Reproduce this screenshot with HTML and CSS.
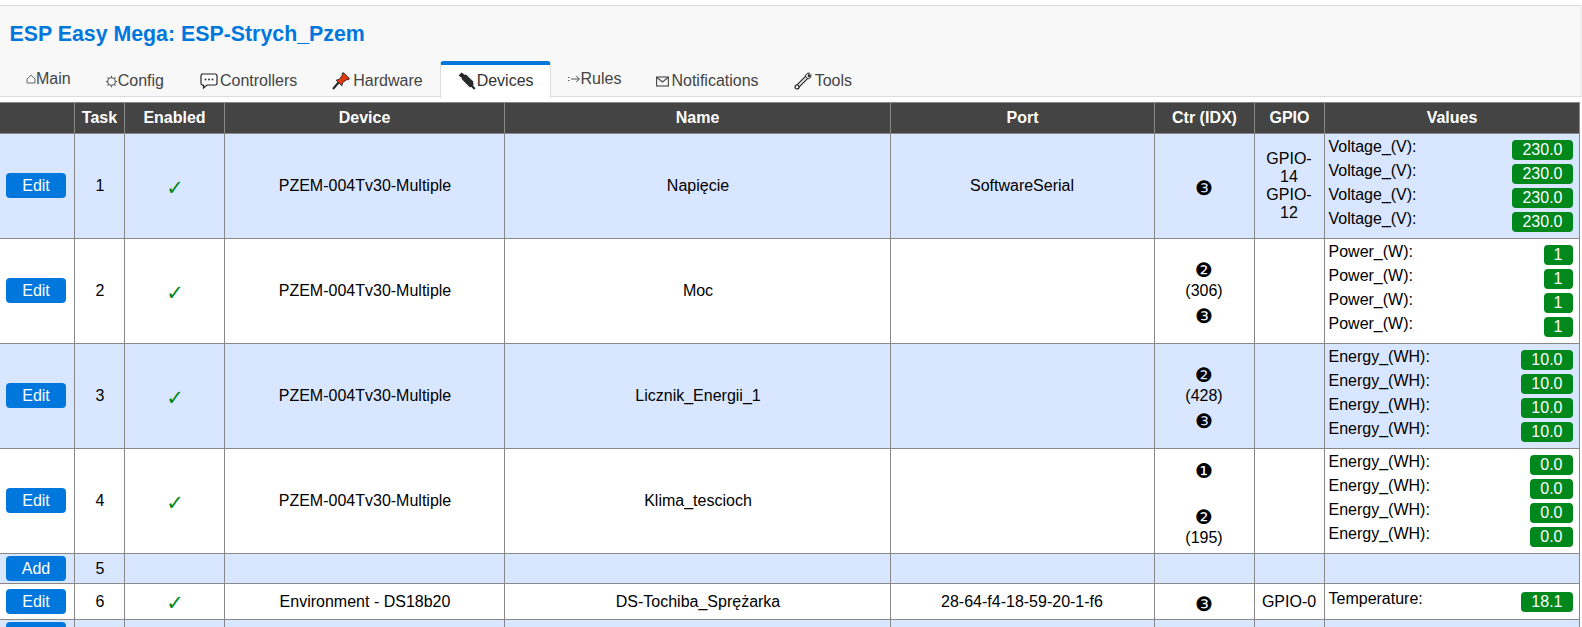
FILE: index.html
```html
<!DOCTYPE html>
<html lang="pl">
<head>
<meta charset="utf-8">
<title>ESP Easy Mega: ESP-Strych_Pzem</title>
<link rel="stylesheet" href="styles.css">
</head>
<body>
<header class="top">
  <h1 class="title">ESP Easy Mega: ESP-Strych_Pzem</h1>
  <nav class="tabs">
    <a class="tab raised first"><svg class="ic ic-main" viewBox="0 0 10 10"><path d="M1 9V5L5 1.2 9 5V9Z" fill="none" stroke="#666" stroke-width="1"/></svg>Main</a>
    <a class="tab cfg"><svg class="ic ic-config" viewBox="0 0 13 13"><circle cx="6.5" cy="6.5" r="3.8" fill="none" stroke="#555" stroke-width="1.1"/><path d="M6.5 .8V2.6M6.5 10.4V12.2M.8 6.5H2.6M10.4 6.5H12.2M2.5 2.5L3.7 3.7M9.3 9.3L10.5 10.5M2.5 10.5L3.7 9.3M9.3 3.7L10.5 2.5" stroke="#555" stroke-width="1.1"/></svg>Config</a>
    <a class="tab"><svg class="ic ic-ctrl" viewBox="0 0 18 16"><path d="M3 1H15.5A1.7 1.7 0 0 1 17 2.7V10.3A1.7 1.7 0 0 1 15.5 12H7L3.5 15V12H3A1.7 1.7 0 0 1 1 10.3V2.7A1.7 1.7 0 0 1 3 1Z" fill="#fff" stroke="#222" stroke-width="1.2"/><circle cx="5.5" cy="6.5" r="1" fill="#333"/><circle cx="9" cy="6.5" r="1" fill="#333"/><circle cx="12.5" cy="6.5" r="1" fill="#333"/></svg>Controllers</a>
    <a class="tab"><svg class="ic ic-pin" viewBox="0 0 18 18"><path d="M1 17L6.5 10.5" stroke="#222" stroke-width="2"/><path d="M4.2 8.2L7.5 7.2 10.5 3 10 1.3 11.5 .8 17.3 6.3 16.6 7.8 15 7.4 10.8 10.5 9.8 13.8Z" fill="#e8380d" stroke="#222" stroke-width=".9"/></svg>Hardware</a>
    <a class="tab active"><svg class="ic ic-plug" viewBox="0 0 18 18"><path d="M.6 3.4L3.6.6 7.4 3.4 4.8 6.4Z" fill="#222"/><path d="M4.6 3.4L8 2.6 15 9.2 15.6 13 12 15.4 8 11.6 3.6 7Z" fill="#2a2a2a"/><path d="M13 13L16.8 17" stroke="#222" stroke-width="2"/></svg>Devices</a>
    <a class="tab raised"><svg class="ic ic-rules" viewBox="0 0 13 10"><path d="M0 3.5H1.4M0 6.5H1.4M3 5H11M8.2 2.2L11.6 5 8.2 7.8" fill="none" stroke="#555" stroke-width="1"/></svg>Rules</a>
    <a class="tab"><svg class="ic ic-mail" viewBox="0 0 13 11"><rect x=".6" y="1" width="11.8" height="9" fill="none" stroke="#444" stroke-width="1.1"/><path d="M1 1.5L6.5 6 12 1.5" fill="none" stroke="#444" stroke-width="1.1"/></svg>Notifications</a>
    <a class="tab"><svg class="ic ic-tools" viewBox="0 0 18 18"><path d="M3 15L14 4" stroke="#222" stroke-width="4" stroke-linecap="round"/><path d="M3 15L14 4" stroke="#ddd" stroke-width="2"/><circle cx="3" cy="15" r="2" fill="#fff" stroke="#222" stroke-width="1.2"/><path d="M13 1.5L15.5 1 14 4 15 5 17 2.5 16.5 5.5 14 7 11 4Z" fill="#ddd" stroke="#222" stroke-width=".9"/></svg>Tools</a>
  </nav>
</header>
<table class="grid">
  <colgroup><col class="c1"><col class="c2"><col class="c3"><col class="c4"><col class="c5"><col class="c6"><col class="c7"><col class="c8"><col class="c9"></colgroup>
  <thead>
    <tr><th></th><th>Task</th><th>Enabled</th><th>Device</th><th>Name</th><th>Port</th><th>Ctr (IDX)</th><th>GPIO</th><th>Values</th></tr>
  </thead>
  <tbody>
    <tr class="big odd">
      <td><a class="btn">Edit</a></td><td>1</td><td><span class="ok">✓</span></td><td>PZEM-004Tv30-Multiple</td><td>Napięcie</td><td>SoftwareSerial</td>
      <td><span class="g">❸</span></td><td>GPIO-14<br>GPIO-12</td>
      <td class="vals">
        <div class="val"><span class="lab">Voltage_(V):</span><span class="num">230.0</span></div>
        <div class="val"><span class="lab">Voltage_(V):</span><span class="num">230.0</span></div>
        <div class="val"><span class="lab">Voltage_(V):</span><span class="num">230.0</span></div>
        <div class="val"><span class="lab">Voltage_(V):</span><span class="num">230.0</span></div>
      </td>
    </tr>
    <tr class="big">
      <td><a class="btn">Edit</a></td><td>2</td><td><span class="ok">✓</span></td><td>PZEM-004Tv30-Multiple</td><td>Moc</td><td></td>
      <td><span class="g">❷</span>(306)<span class="g">❸</span></td><td></td>
      <td class="vals">
        <div class="val"><span class="lab">Power_(W):</span><span class="num">1</span></div>
        <div class="val"><span class="lab">Power_(W):</span><span class="num">1</span></div>
        <div class="val"><span class="lab">Power_(W):</span><span class="num">1</span></div>
        <div class="val"><span class="lab">Power_(W):</span><span class="num">1</span></div>
      </td>
    </tr>
    <tr class="big odd">
      <td><a class="btn">Edit</a></td><td>3</td><td><span class="ok">✓</span></td><td>PZEM-004Tv30-Multiple</td><td>Licznik_Energii_1</td><td></td>
      <td><span class="g">❷</span>(428)<span class="g">❸</span></td><td></td>
      <td class="vals">
        <div class="val"><span class="lab">Energy_(WH):</span><span class="num">10.0</span></div>
        <div class="val"><span class="lab">Energy_(WH):</span><span class="num">10.0</span></div>
        <div class="val"><span class="lab">Energy_(WH):</span><span class="num">10.0</span></div>
        <div class="val"><span class="lab">Energy_(WH):</span><span class="num">10.0</span></div>
      </td>
    </tr>
    <tr class="big">
      <td><a class="btn">Edit</a></td><td>4</td><td><span class="ok">✓</span></td><td>PZEM-004Tv30-Multiple</td><td>Klima_tescioch</td><td></td>
      <td><span class="g">❶</span><br><span class="g">❷</span>(195)</td><td></td>
      <td class="vals">
        <div class="val"><span class="lab">Energy_(WH):</span><span class="num">0.0</span></div>
        <div class="val"><span class="lab">Energy_(WH):</span><span class="num">0.0</span></div>
        <div class="val"><span class="lab">Energy_(WH):</span><span class="num">0.0</span></div>
        <div class="val"><span class="lab">Energy_(WH):</span><span class="num">0.0</span></div>
      </td>
    </tr>
    <tr class="add odd">
      <td><a class="btn">Add</a></td><td>5</td><td></td><td></td><td></td><td></td><td></td><td></td><td></td>
    </tr>
    <tr class="one">
      <td><a class="btn">Edit</a></td><td>6</td><td><span class="ok">✓</span></td><td>Environment - DS18b20</td><td>DS-Tochiba_Sprężarka</td><td>28-64-f4-18-59-20-1-f6</td>
      <td><span class="g">❸</span></td><td>GPIO-0</td>
      <td class="vals"><div class="val"><span class="lab">Temperature:</span><span class="num">18.1</span></div></td>
    </tr>
    <tr class="add odd">
      <td><a class="btn"></a></td><td></td><td></td><td></td><td></td><td></td><td></td><td></td><td></td>
    </tr>
  </tbody>
</table>
</body>
</html>
```
FILE: styles.css
```css
html, body { margin: 0; height: 100%; overflow: hidden; background: #fff; }
body { font-family: "Liberation Sans", Arial, sans-serif; font-size: 16px; color: #000; }
.top { margin-top: 5px; height: 90px; background: #f8f8f8; border-top: 1px solid #ddd; border-bottom: 1px solid #ddd; border-right: 2px solid #f0f0f0; display: flex; flex-direction: column; }
.title { margin: 16px 0 0 9.5px; font-size: 21.33px; line-height: 25px; font-weight: bold; color: #07d; }
.tabs { display: flex; gap: 1px; margin-top: 14px; padding-left: 8px; }
.tab { display: flex; align-items: center; height: 37px; padding: 0 16px; border: 1px solid transparent; border-top-width: 4px; border-radius: 4px 4px 0 0; box-sizing: border-box; color: #444; line-height: 18px; }
.first { padding-left: 17px; padding-right: 15px; }
.cfg { padding-right: 17px; }
.raised { padding-bottom: 5px; }
.active { margin-left: -1px; padding: 0 16px 2px 17px; background: #fff; border-color: #ddd; border-top-color: #07d; border-bottom: 0; color: #333; }
.active + .tab { margin-left: -1px; }
.ic { display: block; flex: none; }
.ic-main { width: 10px; height: 10px; }
.ic-config { width: 13px; height: 13px; }
.ic-ctrl { width: 18px; height: 16px; margin-right: 2px; }
.ic-pin { width: 18px; height: 18px; margin-right: 3px; }
.ic-plug { width: 18px; height: 18px; margin-right: 1px; }
.ic-rules { width: 13px; height: 10px; }
.ic-mail { width: 13px; height: 11px; margin-right: 2px; }
.ic-tools { width: 18px; height: 18px; margin-right: 3px; }
.grid { margin-top: 5px; width: 1579.5px; table-layout: fixed; border-collapse: collapse; }
.c1 { width: 74px; } .c2 { width: 50px; } .c3 { width: 100px; } .c4 { width: 280px; } .c5 { width: 386px; }
.c6 { width: 264px; } .c7 { width: 100px; } .c8 { width: 70px; } .c9 { width: 255px; }
th { height: 30px; padding: 0 0 0 1px; background: #444; color: #fff; font-weight: bold; border: 1px solid #888; }
td { padding: 0 5px 0 7px; text-align: center; vertical-align: middle; border: 1px solid #888; line-height: 18px; }
td:nth-child(n+6) { padding: 0 6px; }
th:first-child, td:first-child { padding: 0; border-left: 0; }
.odd td { background: #d9e6ff; }
.big td { height: 104px; }
.add td { height: 29px; }
.one td { height: 35px; }
.btn { display: block; width: 60px; height: 25px; margin: 0 auto 1px 6px; background: #07d; color: #fff; border-radius: 4px; line-height: 25px; text-align: center; }
.ok { display: block; padding-top: 3px; color: #00881c; font-family: "DejaVu Sans", sans-serif; font-size: 21px; }
.g { display: block; box-sizing: border-box; height: 28px; padding-top: 4px; font-family: "DejaVu Sans", sans-serif; font-size: 20px; line-height: 24px; }
td.vals { padding: 0 6px 0 4px; text-align: left; }
.val { display: flex; justify-content: space-between; align-items: flex-start; height: 24px; }
.lab { line-height: 18px; }
.num { height: 20px; margin-top: 2px; padding: 0 10px; background: #00881c; color: #fff; border-radius: 4px; line-height: 20px; }
```
